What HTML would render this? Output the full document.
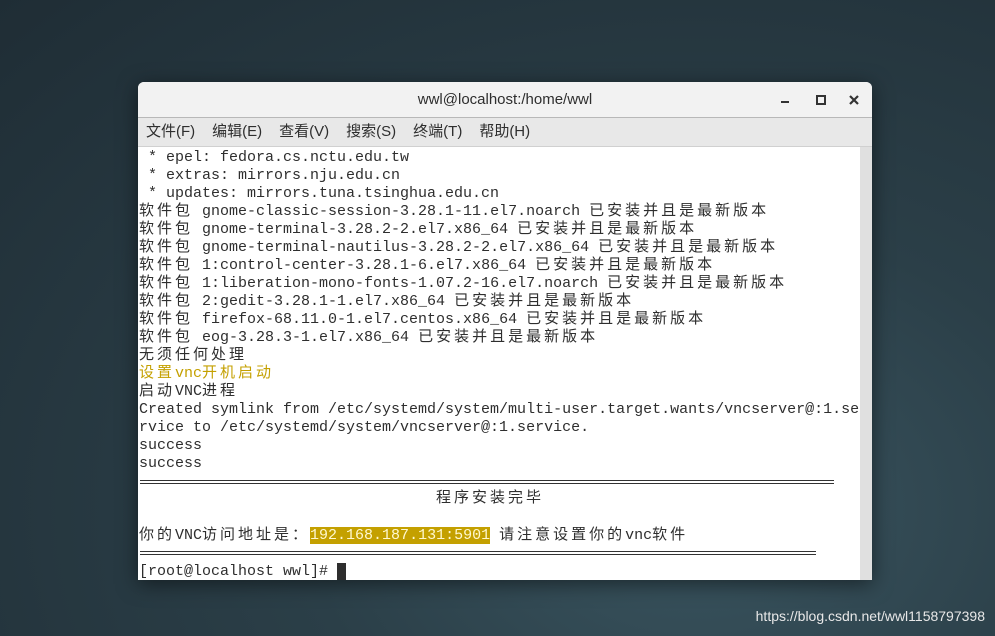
<!DOCTYPE html><html><head><meta charset="utf-8"><style>
body{margin:0;width:995px;height:636px;overflow:hidden;background:radial-gradient(ellipse at 70% 80%,#3a5560 0%,#2b3f48 40%,#1f2d35 100%);font-family:"Liberation Sans","Noto Sans CJK SC",sans-serif;position:relative}
.win{position:absolute;left:138px;top:82px;width:734px;height:498px;background:#fff;border-radius:6px 6px 0 0;overflow:hidden;box-shadow:0 4px 20px rgba(0,0,0,.5)}
.tb{height:35px;background:#f2f2f2;border-bottom:1px solid #b8b8b8;text-align:center;line-height:35px;font-size:15px;color:#2e2e2e}
.mb{height:28px;background:#e8e8e8;border-bottom:1px solid #d0d0d0;font-size:15px;color:#2e2e2e;line-height:28px;padding-left:8px}
.mb span{margin-right:17px}
.term{position:absolute;left:0;top:65px;width:722px;height:433px;font-family:"Liberation Mono","Noto Sans CJK SC",monospace;font-size:15px;color:#2e2e2e;white-space:pre}
.l{position:absolute;left:1px;height:18px;line-height:18px}
.c{letter-spacing:3px}
.y{color:#c4a000}
.sb{position:absolute;right:0;top:65px;width:12px;height:433px;background:#e0e0e0}
.th{position:absolute;right:3px;top:436px;width:6px;height:58px;background:#8a8a8a;border-radius:3px}
.dl{position:absolute;left:2px;height:2px;border-top:1px solid #333;border-bottom:1px solid #333}
</style></head><body>
<div class="win">
<div class="tb">wwl@localhost:/home/wwl</div>
<div style="position:absolute;left:643px;top:19px;width:8px;height:2px;background:#333"></div>
<div style="position:absolute;left:678px;top:13px;width:6px;height:6px;border:2px solid #333"></div>
<svg style="position:absolute;left:711px;top:13px" width="10" height="10"><path d="M1 1L9 9M9 1L1 9" stroke="#333" stroke-width="2.2"/></svg>
<div class="mb"><span>文件(F)</span><span>编辑(E)</span><span>查看(V)</span><span>搜索(S)</span><span>终端(T)</span><span>帮助(H)</span></div>
<div class="term">
<div class="l" style="top:2px"> * epel: fedora.cs.nctu.edu.tw</div>
<div class="l" style="top:20px"> * extras: mirrors.nju.edu.cn</div>
<div class="l" style="top:38px"> * updates: mirrors.tuna.tsinghua.edu.cn</div>
<div class="l" style="top:56px"><span class="c">软件包</span> gnome-classic-session-3.28.1-11.el7.noarch <span class="c">已安装并且是最新版本</span></div>
<div class="l" style="top:74px"><span class="c">软件包</span> gnome-terminal-3.28.2-2.el7.x86_64 <span class="c">已安装并且是最新版本</span></div>
<div class="l" style="top:92px"><span class="c">软件包</span> gnome-terminal-nautilus-3.28.2-2.el7.x86_64 <span class="c">已安装并且是最新版本</span></div>
<div class="l" style="top:110px"><span class="c">软件包</span> 1:control-center-3.28.1-6.el7.x86_64 <span class="c">已安装并且是最新版本</span></div>
<div class="l" style="top:128px"><span class="c">软件包</span> 1:liberation-mono-fonts-1.07.2-16.el7.noarch <span class="c">已安装并且是最新版本</span></div>
<div class="l" style="top:146px"><span class="c">软件包</span> 2:gedit-3.28.1-1.el7.x86_64 <span class="c">已安装并且是最新版本</span></div>
<div class="l" style="top:164px"><span class="c">软件包</span> firefox-68.11.0-1.el7.centos.x86_64 <span class="c">已安装并且是最新版本</span></div>
<div class="l" style="top:182px"><span class="c">软件包</span> eog-3.28.3-1.el7.x86_64 <span class="c">已安装并且是最新版本</span></div>
<div class="l c" style="top:200px">无须任何处理</div>
<div class="l y" style="top:218px"><span class="c">设置</span>vnc<span class="c">开机启动</span></div>
<div class="l" style="top:236px"><span class="c">启动</span>VNC<span class="c">进程</span></div>
<div class="l" style="top:254px">Created symlink from /etc/systemd/system/multi-user.target.wants/vncserver@:1.se</div>
<div class="l" style="top:272px">rvice to /etc/systemd/system/vncserver@:1.service.</div>
<div class="l" style="top:290px">success</div>
<div class="l" style="top:308px">success</div>
<div class="dl" style="top:333px;width:694px"></div>
<div class="l c" style="top:343px;left:298px">程序安装完毕</div>
<div class="l" style="top:380px"><span class="c">你的</span>VNC<span class="c">访问地址是：</span><span style="background:#c4a000;color:#fff8d0">192.168.187.131:5901</span> <span class="c">请注意设置你的</span>vnc<span class="c">软件</span></div>
<div class="dl" style="top:404px;width:676px"></div>
<div class="l" style="top:416px">[root@localhost wwl]# <span style="background:#2e2e2e">&nbsp;</span></div>
</div>
<div class="sb"><div class="th"></div></div>
</div>
<div style="position:absolute;right:10px;top:608px;color:#e8e8e8;font-size:14px">https://blog.csdn.net/wwl1158797398</div>
</body></html>
